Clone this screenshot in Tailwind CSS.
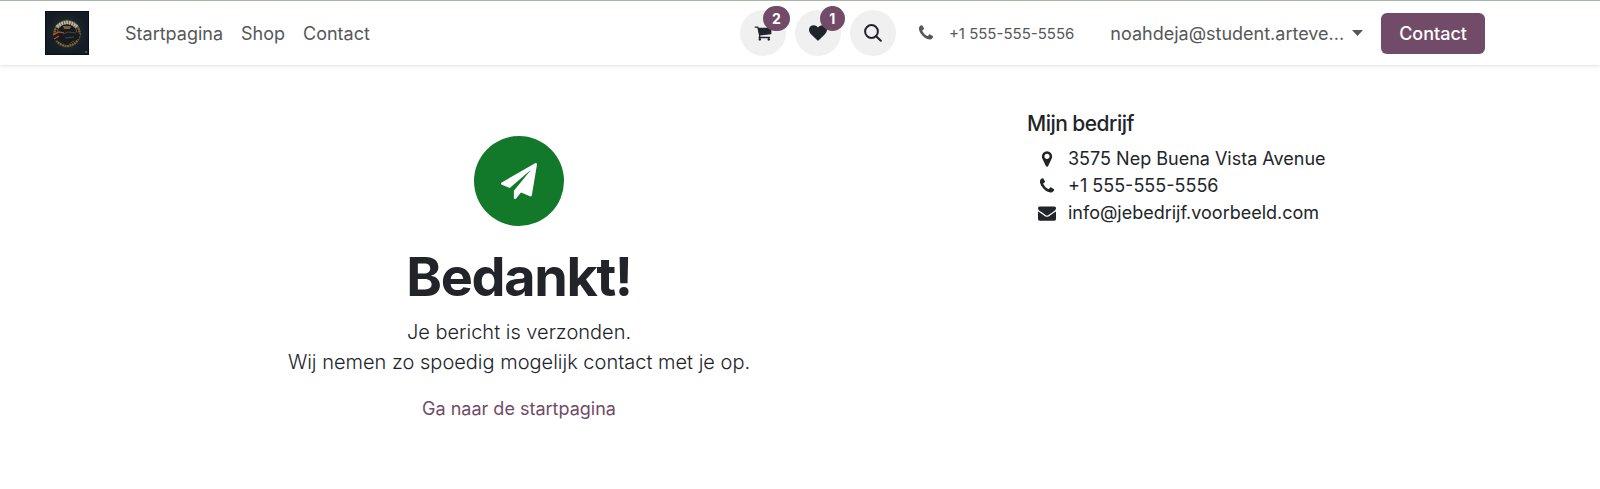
<!DOCTYPE html>
<html lang="nl">
<head>
    <meta charset="UTF-8">
    <meta name="viewport" content="width=device-width, initial-scale=1.0">
    <title>Bedankt! | Mijn bedrijf</title>
    <script src="https://cdn.jsdelivr.net/npm/@tailwindcss/browser@4"></script>
</head>
<body class="min-h-screen bg-white font-['Inter',sans-serif] text-lg leading-[27px] text-[#212529]">
    <!-- Header -->
    <header class="border-t border-[#a3b9a3] shadow-[0_1px_3px_rgba(0,0,0,0.12)]">
        <nav class="flex h-16 items-center pl-[45px] pr-[115px] text-[#555857]">
            <a href="#" aria-label="Mijn bedrijf" class="mr-9 shrink-0">
                <svg class="size-11" viewBox="0 0 44 44">
                    <defs>
                        <radialGradient id="logoBg">
                            <stop offset="0" stop-color="#202e34"/>
                            <stop offset="1" stop-color="#141d25"/>
                        </radialGradient>
                    </defs>
                    <rect width="44" height="44" fill="#080d16"/>
                    <rect x="1" y="1" width="42" height="42" fill="url(#logoBg)"/>
                    <circle cx="22" cy="22.5" r="12.5" fill="#141b20" stroke="#80632a" stroke-width="2.4" stroke-dasharray="2 .5"/>
                    <circle cx="22" cy="22.5" r="10" fill="none" stroke="#94733a" stroke-width=".7"/>
                    <path d="M12 16q10-9 20 0" fill="none" stroke="#b9b7ad" stroke-width="3.4" stroke-dasharray="2 .6"/>
                    <path d="M18 15h8l-1 3h-6z" fill="#7c6227"/>
                    <path d="M8 25l6-4 8-1 5-1 8 4-1 5-6 2-6 4-8-4-6-1z" fill="#171a1e"/>
                    <path d="M8 24l6-3 5 1M9 28l5-3" fill="none" stroke="#bc5424" stroke-width="1.2"/>
                    <path d="M18 23l5-2 8 1M20 27l9-1" fill="none" stroke="#4c5252" stroke-width=".8"/>
                    <path d="M40 41h2" stroke="#7b8488"/>
                </svg>
            </a>
            <ul class="flex gap-[18px]">
                <li><a href="#">Startpagina</a></li>
                <li><a href="#">Shop</a></li>
                <li><a href="#">Contact</a></li>
            </ul>

            <!-- Shop actions -->
            <div class="ml-auto flex gap-[9px] text-[#212529]">
                <a href="#" aria-label="Winkelmandje" class="relative flex size-[46px] items-center justify-center rounded-full bg-[#f0f0f0]">
                    <svg class="size-[18px]" fill="currentColor" viewBox="0 0 1792 1792"><path d="M704 1536q0 52-38 90t-90 38-90-38-38-90 38-90 90-38 90 38 38 90zm896 0q0 52-38 90t-90 38-90-38-38-90 38-90 90-38 90 38 38 90zm128-1088v512q0 24-16.5 42.5t-40.5 21.5l-1044 122q13 60 13 70 0 16-24 64h920q26 0 45 19t19 45-19 45-45 19h-1024q-26 0-45-19t-19-45q0-11 8-31.5t16-36 21.5-40 15.5-29.5l-177-823h-204q-26 0-45-19t-19-45 19-45 45-19h256q16 0 28.5 6.5t19.5 15.5 13 24.5 8 26 5.5 29.5 4.5 26h1201q26 0 45 19t19 45z"/></svg>
                    <span class="absolute -right-1 -top-1 flex h-[25px] min-w-[25px] items-center justify-center rounded-full bg-[#714b67] px-[9px] text-sm font-bold text-white">2</span>
                </a>
                <a href="#" aria-label="Verlanglijst" class="relative flex size-[46px] items-center justify-center rounded-full bg-[#f0f0f0]">
                    <svg class="size-[18px]" fill="currentColor" viewBox="0 0 1792 1792"><path d="M896 1664q-26 0-44-18l-624-602q-10-8-27.5-26t-55.5-65.5-68-97.5-53.5-121-23.5-138q0-220 127-344t351-124q62 0 126.5 21.5t120 58 95.5 68.5 76 68q36-36 76-68t95.5-68.5 120-58 126.5-21.5q224 0 351 124t127 344q0 221-229 450l-623 600q-18 18-44 18z"/></svg>
                    <span class="absolute -right-1 -top-1 flex h-[25px] min-w-[25px] items-center justify-center rounded-full bg-[#714b67] px-[9px] text-sm font-bold text-white">1</span>
                </a>
                <button type="button" aria-label="Zoeken" class="flex size-[46px] items-center justify-center rounded-full bg-[#f0f0f0]">
                    <svg class="size-[18px]" fill="none" stroke="currentColor" stroke-width="2" viewBox="0 0 18 18"><circle cx="7.5" cy="7.5" r="6.4"/><path stroke-linecap="round" d="M12.2 12.2l4.6 4.6"/></svg>
                </button>
            </div>

            <a href="#" class="ml-[21px] flex items-center gap-[14px] text-[15px]">
                <svg class="size-[18px]" fill="currentColor" viewBox="0 0 1792 1792"><path d="M1600 1240q0 27-10 70.5t-21 68.5q-21 50-122 106-94 51-186 51-27 0-53-3.5t-57.5-12.5-47-14.5-55.5-20.5-49-18q-98-35-175-83-127-79-264-216t-216-264q-48-77-83-175-3-9-18-49t-20.5-55.5-14.5-47-12.5-57.5-3.5-53q0-92 51-186 56-101 106-122 25-11 68.5-21t70.5-10q14 0 21 3 18 6 53 76 11 19 30 54t35 63.5 31 53.5q3 4 17.5 25t21.5 35.5 7 28.5q0 20-28.5 50t-62 55-62 53-28.5 46q0 9 5 22.5t8.5 20.5 14 24 11.5 19q76 137 174 235t235 174q2 1 19 11.5t24 14 20.5 8.5 22.5 5q18 0 46-28.5t53-62 55-62 50-28.5q14 0 28.5 7t35.5 21.5 25 17.5q25 15 53.5 31t63.5 35 54 30q70 35 76 53 3 7 3 21z"/></svg>
                <span>+1 555-555-5556</span>
            </a>
            <button type="button" class="ml-9 flex items-center gap-2">
                <span>noahdeja@student.arteve...</span>
                <svg class="h-[6px] w-[11px]" fill="currentColor" viewBox="0 0 11 6"><path d="M0 0h11L5.5 6z"/></svg>
            </button>
            <a href="#" class="ml-[18px] rounded-md bg-[#714b67] px-[18px] py-[7px] font-medium text-white">Contact</a>
        </nav>
    </header>

    <!-- Confirmation -->
    <main class="grid grid-cols-3 pl-[27px] pr-[97px] pt-[45px]">
        <section class="col-span-2 flex flex-col items-center px-4 pt-[26px] text-center">
            <div class="flex size-[90px] items-center justify-center rounded-full bg-[#12782a]">
                <svg class="size-9" fill="#fff" viewBox="0 0 1792 1792"><path d="M1764 11q33 24 27 64l-256 1536q-5 29-32 45-14 8-31 8-11 0-24-5l-453-185-242 295q-18 23-49 23-13 0-22-4-19-7-30.5-23.5t-11.5-36.5v-349l864-1059-1069 925-395-162q-37-14-40-55-2-40 32-59l1664-960q15-9 32-9 20 0 36 11z"/></svg>
            </div>
            <h1 class="mt-[18px] text-[54px] leading-[65px] font-bold tracking-tight">Bedankt!</h1>
            <p class="mt-2 text-xl leading-[30px] font-light">Je bericht is verzonden.<br>Wij nemen zo spoedig mogelijk contact met je op.</p>
            <a href="#" class="mt-[18px] text-[#714b67]">Ga naar de startpagina</a>
        </section>
        <aside class="px-4">
            <h2 class="text-[21px] font-medium tracking-tight">Mijn bedrijf</h2>
            <ul class="mt-2">
                <li class="flex items-center gap-3 pl-[11px]">
                    <svg class="size-[18px]" fill="currentColor" viewBox="0 0 1792 1792"><path d="M1152 640q0-106-75-181t-181-75-181 75-75 181 75 181 181 75 181-75 75-181zm256 0q0 109-33 179l-364 774q-16 33-47.5 52t-67.5 19-67.5-19-46.5-52l-365-774q-33-70-33-179 0-212 150-362t362-150 362 150 150 362z"/></svg>
                    <span>3575 Nep Buena Vista Avenue</span>
                </li>
                <li class="flex items-center gap-3 pl-[11px]">
                    <svg class="size-[18px]" fill="currentColor" viewBox="0 0 1792 1792"><path d="M1600 1240q0 27-10 70.5t-21 68.5q-21 50-122 106-94 51-186 51-27 0-53-3.5t-57.5-12.5-47-14.5-55.5-20.5-49-18q-98-35-175-83-127-79-264-216t-216-264q-48-77-83-175-3-9-18-49t-20.5-55.5-14.5-47-12.5-57.5-3.5-53q0-92 51-186 56-101 106-122 25-11 68.5-21t70.5-10q14 0 21 3 18 6 53 76 11 19 30 54t35 63.5 31 53.5q3 4 17.5 25t21.5 35.5 7 28.5q0 20-28.5 50t-62 55-62 53-28.5 46q0 9 5 22.5t8.5 20.5 14 24 11.5 19q76 137 174 235t235 174q2 1 19 11.5t24 14 20.5 8.5 22.5 5q18 0 46-28.5t53-62 55-62 50-28.5q14 0 28.5 7t35.5 21.5 25 17.5q25 15 53.5 31t63.5 35 54 30q70 35 76 53 3 7 3 21z"/></svg>
                    <span>+1 555-555-5556</span>
                </li>
                <li class="flex items-center gap-3 pl-[11px]">
                    <svg class="size-[18px]" fill="currentColor" viewBox="0 0 1792 1792"><path d="M1792 710v794q0 66-47 113t-113 47h-1472q-66 0-113-47t-47-113v-794q44 49 101 87 362 246 497 345 57 42 92.5 65.5t94.5 48 110 24.5h2q51 0 110-24.5t94.5-48 92.5-65.5q170-123 498-345 57-39 100-87zm0-294q0 79-49 151t-122 123q-376 261-468 325-10 7-42.5 31t-54 38.5-52 32.5-57.5 27-50 9h-2q-23 0-50-9t-57.5-27-52-32.5-54-38.5-42.5-31q-91-64-262-182.5t-205-142.5q-62-42-117-115.5t-55-136.5q0-78 41.5-130t118.5-52h1472q65 0 112.5 47t47.5 113z"/></svg>
                    <span>info@jebedrijf.voorbeeld.com</span>
                </li>
            </ul>
        </aside>
    </main>
</body>
</html>
